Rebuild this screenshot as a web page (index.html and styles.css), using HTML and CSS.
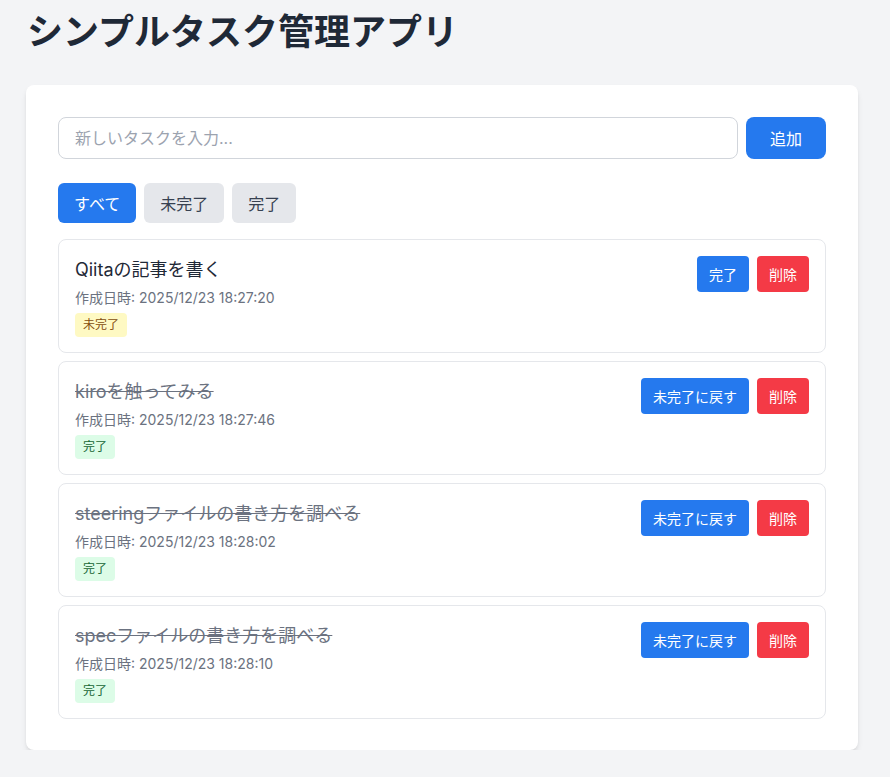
FILE: index.html
```html
<!DOCTYPE html>
<html lang="ja">
<head>
<meta charset="utf-8">
<title>シンプルタスク管理アプリ</title>
<link rel="stylesheet" href="styles.css">
</head>
<body>
<div class="page">
  <h1 class="title">シンプルタスク管理アプリ</h1>
  <div class="panel">
    <div class="add-row">
      <input class="task-input" type="text" placeholder="新しいタスクを入力...">
      <button class="btn-add">追加</button>
    </div>
    <div class="filters">
      <button class="filter active">すべて</button>
      <button class="filter">未完了</button>
      <button class="filter">完了</button>
    </div>
    <div class="tasks">
      <div class="task">
        <div class="task-info">
          <div class="task-title">Qiitaの記事を書く</div>
          <div class="task-date">作成日時: 2025/12/23 18:27:20</div>
          <span class="badge badge-todo">未完了</span>
        </div>
        <div class="task-actions">
          <button class="btn btn-blue">完了</button>
          <button class="btn btn-red">削除</button>
        </div>
      </div>
      <div class="task">
        <div class="task-info">
          <div class="task-title done">kiroを触ってみる</div>
          <div class="task-date">作成日時: 2025/12/23 18:27:46</div>
          <span class="badge badge-done">完了</span>
        </div>
        <div class="task-actions">
          <button class="btn btn-blue">未完了に戻す</button>
          <button class="btn btn-red">削除</button>
        </div>
      </div>
      <div class="task">
        <div class="task-info">
          <div class="task-title done">steeringファイルの書き方を調べる</div>
          <div class="task-date">作成日時: 2025/12/23 18:28:02</div>
          <span class="badge badge-done">完了</span>
        </div>
        <div class="task-actions">
          <button class="btn btn-blue">未完了に戻す</button>
          <button class="btn btn-red">削除</button>
        </div>
      </div>
      <div class="task">
        <div class="task-info">
          <div class="task-title done">specファイルの書き方を調べる</div>
          <div class="task-date">作成日時: 2025/12/23 18:28:10</div>
          <span class="badge badge-done">完了</span>
        </div>
        <div class="task-actions">
          <button class="btn btn-blue">未完了に戻す</button>
          <button class="btn btn-red">削除</button>
        </div>
      </div>
    </div>
  </div>
</div>
</body>
</html>
```

FILE: styles.css
```css
* { box-sizing: border-box; }
html, body {
  margin: 0;
  padding: 0;
  background: #f3f4f6;
  font-family: Inter, "Noto Sans CJK JP", "Noto Sans", sans-serif;
  color: #1f2937;
}
.page {
  width: 832px;
  margin-left: 26px;
  padding-top: 12px;
}
.title {
  margin: 0 0 33px 0;
  padding-left: 1px;
  font-size: 36px;
  line-height: 40px;
  font-weight: 700;
  color: #1f2937;
  letter-spacing: 0;
}
.panel {
  background: #ffffff;
  border-radius: 8px;
  padding: 32px 32px 31px 32px;
  box-shadow: 0 4px 6px -1px rgba(0,0,0,0.1), 0 2px 4px -2px rgba(0,0,0,0.1);
}
.add-row {
  display: flex;
  gap: 8px;
  margin-bottom: 24px;
}
.task-input {
  flex: 1;
  height: 42px;
  border: 1px solid #d1d5db;
  border-radius: 8px;
  padding: 8px 16px;
  font-family: inherit;
  font-size: 16px;
  color: #1f2937;
  outline: none;
}
.task-input::placeholder { color: #9ca3af; }
.btn-add {
  width: 80px;
  height: 42px;
  border: none;
  border-radius: 8px;
  background: #2579ee;
  color: #ffffff;
  font-family: inherit;
  font-size: 16px;
}
.filters {
  display: flex;
  gap: 8px;
  margin-bottom: 16px;
}
.filter {
  height: 40px;
  padding: 0 16px;
  border: none;
  border-radius: 6px;
  background: #e5e7eb;
  color: #374151;
  font-family: inherit;
  font-size: 16px;
}
.filter.active {
  background: #2579ee;
  color: #ffffff;
}
.tasks {
  display: flex;
  flex-direction: column;
  gap: 8px;
}
.task {
  display: flex;
  justify-content: space-between;
  align-items: flex-start;
  border: 1px solid #e5e7eb;
  border-radius: 8px;
  padding: 16px;
  height: 114px;
}
.task-info {
  display: flex;
  flex-direction: column;
  align-items: flex-start;
}
.task-title {
  font-size: 18px;
  line-height: 28px;
  color: #1f2937;
}
.task-title.done {
  text-decoration: line-through;
  color: #6b7280;
}
.task-date {
  margin-top: 4px;
  font-size: 14px;
  line-height: 20px;
  color: #6b7280;
}
.badge {
  margin-top: 5px;
  font-size: 12px;
  line-height: 16px;
  padding: 4px 8px;
  border-radius: 4px;
}
.badge-todo { background: #fef9c3; color: #854d0e; }
.badge-done { background: #dcfce7; color: #166534; }
.task-actions {
  display: flex;
  gap: 8px;
}
.btn {
  height: 36px;
  padding: 0 12px;
  border: none;
  border-radius: 4px;
  color: #ffffff;
  font-family: inherit;
  font-size: 14px;
}
.btn-blue { background: #2579ee; }
.btn-red { background: #f43a46; }
```
